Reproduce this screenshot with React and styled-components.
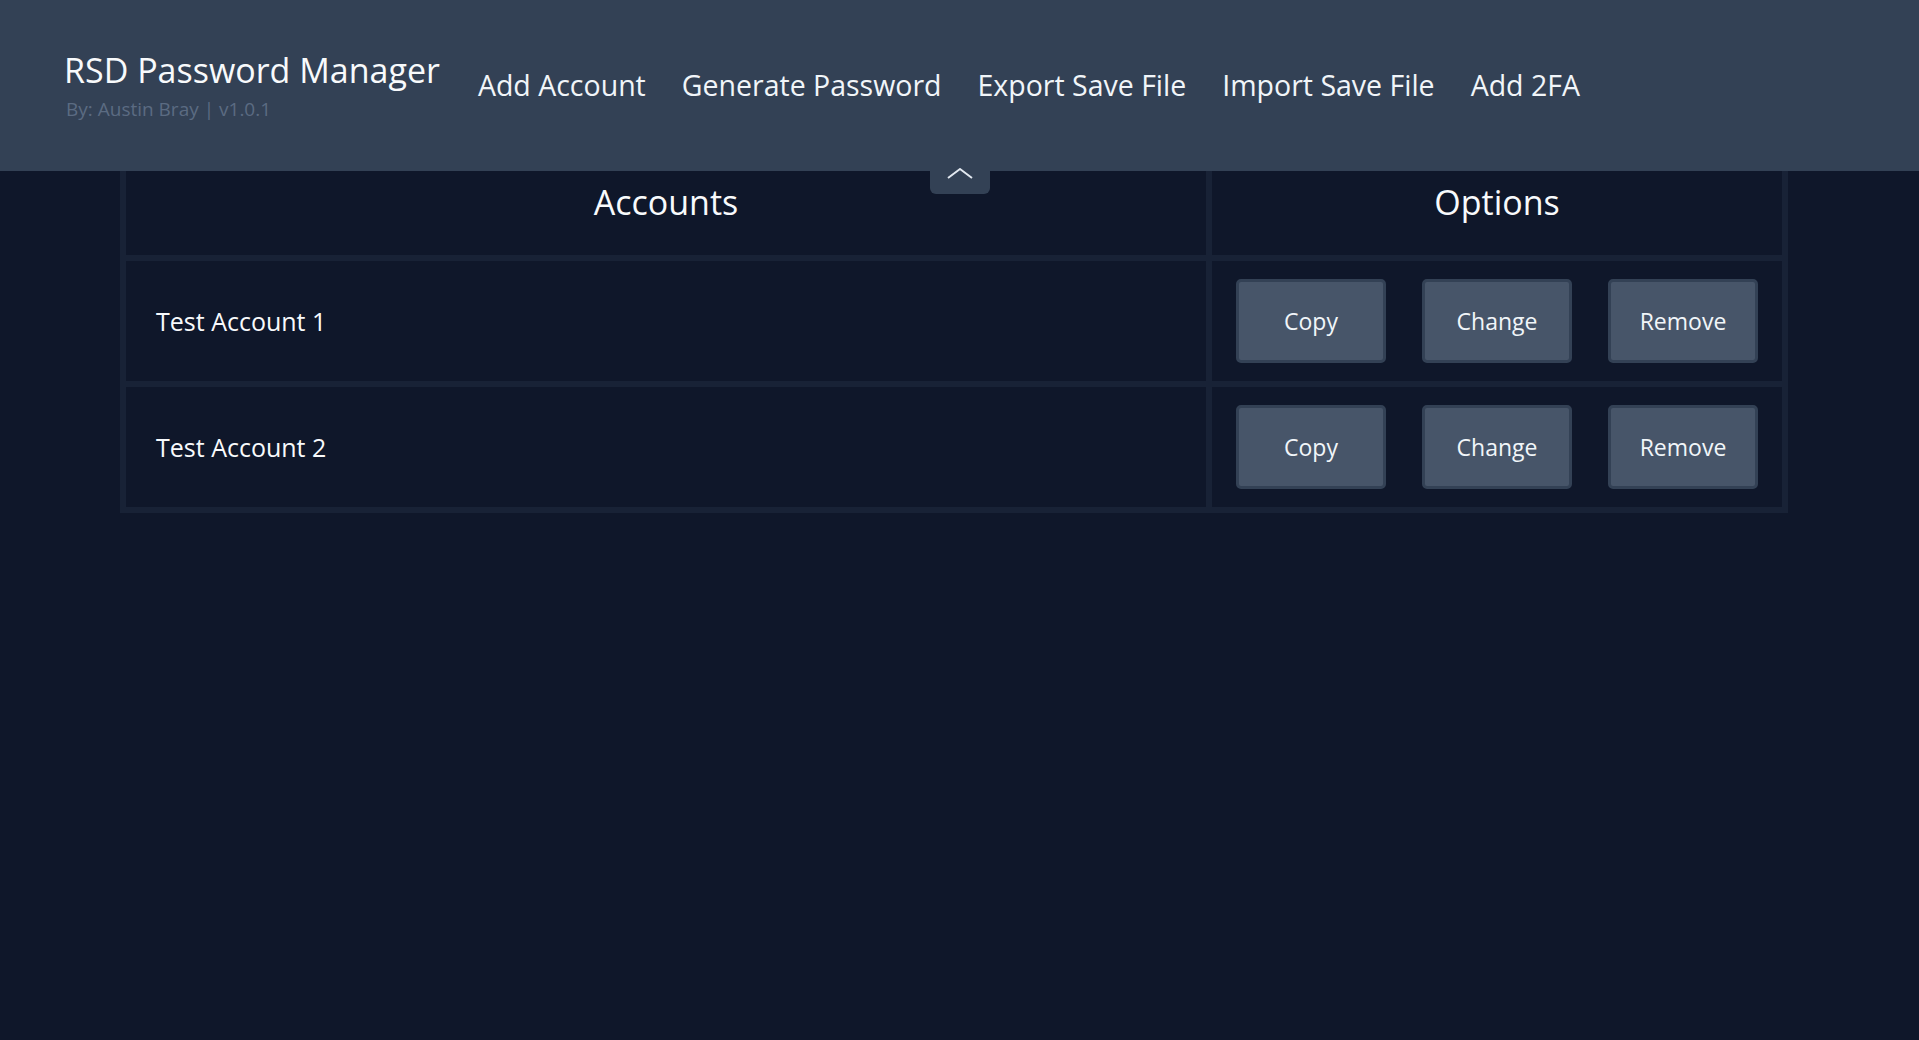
import React from 'react';
import styled, { createGlobalStyle } from 'styled-components';

const GlobalStyle = createGlobalStyle`
  body {
    margin: 0;
    background: #0f172a;
    font-family: "Open Sans", "Noto Sans", sans-serif;
    color: #f1f5f9;
  }
`;

const accounts = ['Test Account 1', 'Test Account 2'];
const navItems = ['Add Account', 'Generate Password', 'Export Save File', 'Import Save File', 'Add 2FA'];

const Page = styled.div`
  min-height: 100vh;
  background: #0f172a;
`;

const Header = styled.header`
  position: relative;
  height: 171px;
  background: #334155;
  display: flex;
  align-items: center;
  gap: 38px;
  padding-left: 64px;
  box-sizing: border-box;
`;

const Brand = styled.div`
  display: flex;
  flex-direction: column;
`;

const Title = styled.h1`
  margin: 0;
  font-size: 34px;
  font-weight: 400;
  line-height: 42px;
  color: #f8fafc;
`;

const Byline = styled.span`
  margin: 5px 0 0 2px;
  font-size: 19px;
  line-height: 26px;
  color: #5b6b82;
`;

const Nav = styled.nav`
  display: flex;
  align-items: center;
  gap: 36px;
  margin-top: -2px;
`;

const NavLink = styled.a`
  font-size: 28.5px;
  color: #f1f5f9;
  text-decoration: none;
  cursor: pointer;
`;

const CollapseTab = styled.button`
  position: absolute;
  top: calc(100% - 12px);
  left: 50%;
  transform: translateX(-50%);
  width: 60px;
  height: 35px;
  padding: 9px 0 0;
  border: none;
  border-radius: 0 0 6px 6px;
  background: #334155;
  display: flex;
  justify-content: center;
  align-items: flex-start;
  cursor: pointer;
`;

const Frame = styled.div`
  margin-left: 120px;
  width: 1668px;
  box-sizing: border-box;
  padding: 0 6px 6px;
  background: #182236;
  display: grid;
  grid-template-columns: 1080px 1fr;
  gap: 6px;
`;

const HeadCell = styled.div`
  height: 84px;
  background: #0f172a;
  display: flex;
  justify-content: center;
  align-items: flex-start;
  padding-top: 8px;
  box-sizing: border-box;
  font-size: 34px;
  line-height: 46px;
  color: #f8fafc;
`;

const Cell = styled.div`
  height: 120px;
  background: #0f172a;
  display: flex;
  align-items: center;
  padding: 0 ${p => (p.$options ? '24px' : '30px')};
  box-sizing: border-box;
  justify-content: ${p => (p.$options ? 'space-between' : 'flex-start')};
  font-size: 25px;
  color: #f8fafc;
`;

const ActionButton = styled.button`
  width: 150px;
  height: 84px;
  background: #475569;
  border: 3px solid #334155;
  border-radius: 5px;
  font-family: "Open Sans", "Noto Sans", sans-serif;
  font-size: 23px;
  color: #f1f5f9;
  cursor: pointer;
`;

const Chevron = () => (
  <svg width="26" height="11" viewBox="0 0 26 11" fill="none">
    <polyline points="1,10 13,1 25,10" stroke="#e2e8f0" strokeWidth="2" strokeLinejoin="round" />
  </svg>
);

export default function App() {
  return (
    <Page>
      <GlobalStyle />
      <Header>
        <Brand>
          <Title>RSD Password Manager</Title>
          <Byline>By: Austin Bray | v1.0.1</Byline>
        </Brand>
        <Nav>
          {navItems.map(item => (
            <NavLink key={item}>{item}</NavLink>
          ))}
        </Nav>
        <CollapseTab aria-label="collapse">
          <Chevron />
        </CollapseTab>
      </Header>

      <Frame>
        <HeadCell>Accounts</HeadCell>
        <HeadCell>Options</HeadCell>
        {accounts.map(name => (
          <React.Fragment key={name}>
            <Cell>{name}</Cell>
            <Cell $options>
              <ActionButton>Copy</ActionButton>
              <ActionButton>Change</ActionButton>
              <ActionButton>Remove</ActionButton>
            </Cell>
          </React.Fragment>
        ))}
      </Frame>
    </Page>
  );
}
